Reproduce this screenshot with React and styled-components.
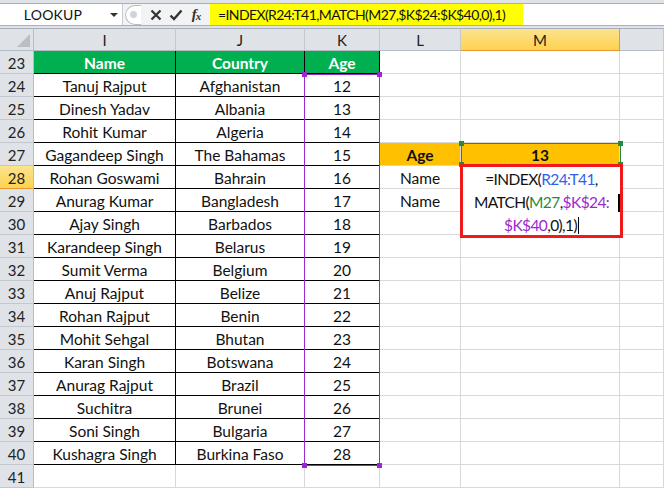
import styled, { createGlobalStyle } from 'styled-components'

const GlobalStyle = createGlobalStyle`
    html, body {
        margin: 0;
        padding: 0;
        background: #ffffff;
    }
    body {
        font-family: Lato, "Liberation Sans", sans-serif;
    }
`;

const Page = styled.div`
    width: 664px;
    height: 489px;
    overflow: hidden;
    background: #ffffff;
    display: flex;
    flex-direction: column;
`;

const FormulaBar = styled.div`
    height: 28px;
    box-sizing: border-box;
    background: #dfe3e8;
    padding-top: 3px;
    padding-bottom: 2px;
    display: flex;
`;

const BarInner = styled.div`
    flex: 1;
    display: flex;
    align-items: stretch;
    background: #ffffff;
    border-top: 1px solid #a9b0b9;
    border-bottom: 1px solid #a9b0b9;
`;

const NameBox = styled.div`
    width: 106px;
    display: flex;
    align-items: center;
    justify-content: center;
    font-size: 14px;
    color: #111;
    letter-spacing: 0.2px;
`;

const DropArrow = styled.div`
    width: 16px;
    display: flex;
    align-items: center;
    justify-content: center;
    &::after {
        content: '';
        border-left: 4px solid transparent;
        border-right: 4px solid transparent;
        border-top: 4px solid #333;
    }
`;

const ButtonGroup = styled.div`
    width: 87px;
    display: flex;
    align-items: center;
    background: #f1f3f5;
    border-left: 1px solid #c7ccd3;
`;

const Knob = styled.div`
    width: 15px;
    height: 18px;
    margin-left: 2px;
    margin-right: 4px;
    border: 1px solid #b9bec6;
    border-right: none;
    border-radius: 10px 0 0 10px;
    display: flex;
    align-items: center;
    justify-content: center;
    background: #ffffff;
    &::after {
        content: '';
        width: 7px;
        height: 7px;
        border-radius: 50%;
        background: #d0d4da;
    }
`;

const IconBtn = styled.div`
    width: ${p => p.$w || 20}px;
    display: flex;
    align-items: center;
    justify-content: center;
`;

const Fx = styled.span`
    font-family: "Liberation Serif", serif;
    font-style: italic;
    font-size: 15px;
    font-weight: bold;
    color: #333;
    letter-spacing: -1px;
    sub {
        font-size: 11px;
        vertical-align: -1px;
    }
`;

const FormulaInput = styled.div`
    flex: 1;
    display: flex;
    align-items: center;
`;

const Highlight = styled.span`
    background: #ffff00;
    height: 21px;
    display: flex;
    align-items: center;
    padding: 0 18px 0 8px;
    font-size: 14px;
    letter-spacing: -0.6px;
    color: #111;
`;

const Sheet = styled.div`
    position: relative;
    display: grid;
    grid-template-columns: 34px 142px 129px 75px 81px 159px 44px;
    grid-auto-rows: 23px;
`;

const Corner = styled.div`
    box-sizing: border-box;
    background: #dfe3e8;
    border-right: 1px solid #b7bdc5;
    border-bottom: 1px solid #b7bdc5;
    border-top: 1px solid #a9b0b9;
    position: relative;
    &::after {
        content: '';
        position: absolute;
        right: 3px;
        bottom: 3px;
        border-left: 13px solid transparent;
        border-bottom: 13px solid #b9bfc7;
    }
`;

const ColHead = styled.div`
    box-sizing: border-box;
    border-top: 1px solid #a9b0b9;
    border-right: 1px solid ${p => (p.$active ? '#e49a34' : '#c3c8cf')};
    border-bottom: 1px solid ${p => (p.$active ? '#e49a34' : '#b7bdc5')};
    background: ${p => (p.$active ? 'linear-gradient(#fbe38f, #ffd24f)' : '#dfe3e8')};
    display: flex;
    align-items: center;
    justify-content: center;
    font-size: 15px;
    color: #222;
`;

const RowHead = styled.div`
    box-sizing: border-box;
    border-right: 1px solid #b7bdc5;
    border-bottom: 1px solid ${p => (p.$active ? '#e49a34' : '#c3c8cf')};
    background: ${p => (p.$active ? 'linear-gradient(#fbe38f, #ffd24f)' : '#dfe3e8')};
    display: flex;
    align-items: center;
    justify-content: center;
    padding-top: 1px;
    font-size: 15px;
    color: #222;
`;

const Cell = styled.div`
    box-sizing: border-box;
    border-right: 1px solid ${p => (p.$boxed ? '#000' : '#d9d9d9')};
    border-bottom: 1px solid ${p => (p.$boxed ? '#000' : '#d9d9d9')};
    background: ${p => p.$bg || '#ffffff'};
    color: ${p => p.$color || '#111'};
    font-weight: ${p => (p.$bold ? 700 : 400)};
    display: flex;
    align-items: center;
    justify-content: center;
    padding-top: 1px;
    font-size: 15.5px;
    white-space: nowrap;
`;

const RefBox = styled.div`
    position: absolute;
    box-sizing: border-box;
    border: 1px solid ${p => p.$color};
    pointer-events: none;
`;

const Handle = styled.span`
    position: absolute;
    width: 5px;
    height: 5px;
    background: ${p => p.$color};
    ${p => (p.$top ? 'top: -3px;' : 'bottom: -3px;')}
    ${p => (p.$left ? 'left: -3px;' : 'right: -3px;')}
`;

const Editor = styled.div`
    position: absolute;
    left: 460px;
    top: 136px;
    width: 163px;
    height: 74px;
    box-sizing: border-box;
    border: 3px solid #f01a1a;
    background: #ffffff;
    padding-top: 1px;
    font-size: 15.5px;
    letter-spacing: -0.6px;
    color: #111;
    line-height: 23px;
    text-align: center;
`;

const EditLine = styled.div`
    white-space: nowrap;
`;

const Ref = styled.span`
    color: ${p => p.$color};
`;

const Cursor = styled.span`
    display: inline-block;
    width: 1px;
    height: 17px;
    background: #000;
    vertical-align: -3px;
    margin-left: 1px;
`;

const EdgeCaret = styled.span`
    position: absolute;
    right: 0px;
    top: 27px;
    width: 2px;
    height: 18px;
    background: #000;
`;

const rows = [
    ['Tanuj Rajput', 'Afghanistan', 12],
    ['Dinesh Yadav', 'Albania', 13],
    ['Rohit Kumar', 'Algeria', 14],
    ['Gagandeep Singh', 'The Bahamas', 15],
    ['Rohan Goswami', 'Bahrain', 16],
    ['Anurag Kumar', 'Bangladesh', 17],
    ['Ajay Singh', 'Barbados', 18],
    ['Karandeep Singh', 'Belarus', 19],
    ['Sumit Verma', 'Belgium', 20],
    ['Anuj Rajput', 'Belize', 21],
    ['Rohan Rajput', 'Benin', 22],
    ['Mohit Sehgal', 'Bhutan', 23],
    ['Karan Singh', 'Botswana', 24],
    ['Anurag Rajput', 'Brazil', 25],
    ['Suchitra', 'Brunei', 26],
    ['Soni Singh', 'Bulgaria', 27],
    ['Kushagra Singh', 'Burkina Faso', 28],
];

const ORANGE = '#ffc000';
const GREEN = '#00b050';
const PURPLE = '#9c27d0';
const REFGREEN = '#2a8a3c';

// lookup block to the right of the table
const side = {
    27: { l: 'Age', m: '13', bg: ORANGE, bold: true },
    28: { l: 'Name' },
    29: { l: 'Name' },
};

function Corners({ color }) {
    return (
        <>
            <Handle $color={color} $top $left />
            <Handle $color={color} $top />
            <Handle $color={color} $left />
            <Handle $color={color} />
        </>
    )
}

function App() {
    return (
        <Page>
            <GlobalStyle />
            <FormulaBar>
                <BarInner>
                    <NameBox>LOOKUP</NameBox>
                    <DropArrow />
                    <ButtonGroup>
                        <Knob />
                        <IconBtn $w={22}>
                            <svg width="12" height="12" viewBox="0 0 12 12">
                                <path d="M1.5 1.5 L10.5 10.5 M10.5 1.5 L1.5 10.5" stroke="#333" strokeWidth="2.2" />
                            </svg>
                        </IconBtn>
                        <IconBtn $w={18}>
                            <svg width="14" height="12" viewBox="0 0 14 12">
                                <path d="M1.5 6.5 L5 10 L12.5 1.5" stroke="#333" strokeWidth="2.4" fill="none" />
                            </svg>
                        </IconBtn>
                        <IconBtn $w={22}>
                            <Fx>f<sub>x</sub></Fx>
                        </IconBtn>
                    </ButtonGroup>
                    <FormulaInput>
                        <Highlight>=INDEX(R24:T41,MATCH(M27,$K$24:$K$40,0),1)</Highlight>
                    </FormulaInput>
                </BarInner>
            </FormulaBar>
            <Sheet>
                <Corner />
                <ColHead>I</ColHead>
                <ColHead>J</ColHead>
                <ColHead>K</ColHead>
                <ColHead>L</ColHead>
                <ColHead $active>M</ColHead>
                <ColHead />

                <RowHead>23</RowHead>
                <Cell $boxed $bg={GREEN} $color="#fff" $bold>Name</Cell>
                <Cell $boxed $bg={GREEN} $color="#fff" $bold>Country</Cell>
                <Cell $boxed $bg={GREEN} $color="#fff" $bold>Age</Cell>
                <Cell />
                <Cell />
                <Cell />

                {rows.map((r, i) => {
                    const num = 24 + i
                    const s = side[num] || {}
                    return [
                        <RowHead key={`h${num}`} $active={num === 28}>{num}</RowHead>,
                        <Cell key={`i${num}`} $boxed>{r[0]}</Cell>,
                        <Cell key={`j${num}`} $boxed>{r[1]}</Cell>,
                        <Cell key={`k${num}`} $boxed>{r[2]}</Cell>,
                        <Cell key={`l${num}`} $bg={s.bg} $bold={s.bold}>{s.l}</Cell>,
                        <Cell key={`m${num}`} $bg={s.bg} $bold={s.bold}>{s.m}</Cell>,
                        <Cell key={`n${num}`} />,
                    ]
                })}

                <RowHead>41</RowHead>
                <Cell />
                <Cell />
                <Cell />
                <Cell />
                <Cell />
                <Cell />

                <RefBox $color={PURPLE} style={{ left: 304, top: 46, width: 76, height: 392 }}>
                    <Corners color={PURPLE} />
                </RefBox>
                <RefBox $color={REFGREEN} style={{ left: 461, top: 115, width: 160, height: 22 }}>
                    <Corners color={REFGREEN} />
                </RefBox>
                <Editor>
                    <EditLine>=INDEX(<Ref $color="#2f5fef">R24:T41</Ref>,</EditLine>
                    <EditLine>MATCH(<Ref $color={REFGREEN}>M27</Ref>,<Ref $color={PURPLE}>$K$24:</Ref></EditLine>
                    <EditLine><Ref $color={PURPLE}>$K$40</Ref>,0),1)<Cursor /></EditLine>
                    <EdgeCaret />
                </Editor>
            </Sheet>
        </Page>
    )
}

export default App
